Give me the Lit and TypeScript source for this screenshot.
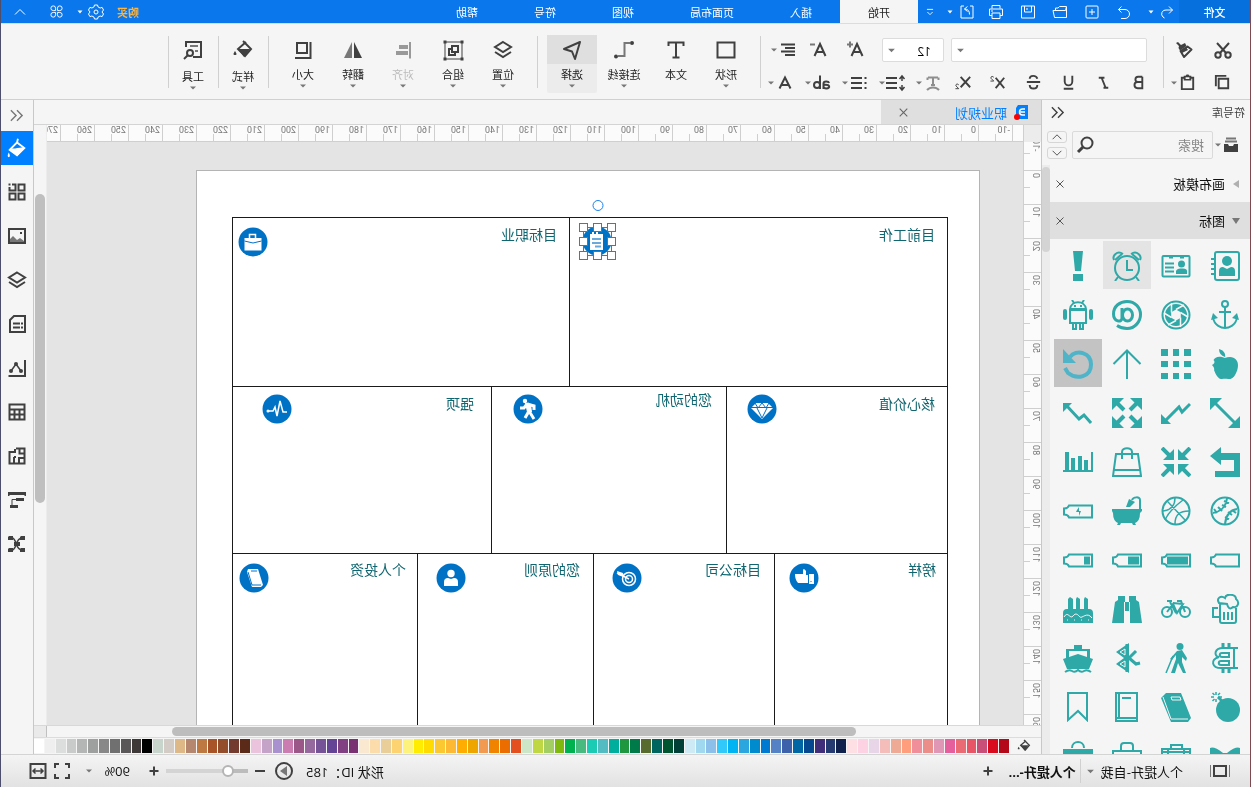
import { LitElement, html, svg, css, nothing, TemplateResult } from "lit";
import { customElement, property } from "lit/decorators.js";
import { styleMap } from "lit/directives/style-map.js";
import { classMap } from "lit/directives/class-map.js";

type Glyph = { box: number; body: TemplateResult };

const g = (box: number, body: TemplateResult): Glyph => ({ box, body });

/* Interface glyphs. s = stroked with currentColor, f = filled with currentColor. */
const GLYPHS: Record<string, Glyph> = {
  // title bar
  undo: g(16, svg`<path class="s1" d="M5.500 2.500 2.500 5.500 5.500 8.500M2.500 5.500H9a4.500 4.500 0 0 1 0 9H5"/>`),
  redoTop: g(16, svg`<path class="s1" d="M10 2.500 13.500 6 10 9.500M13.500 6H7a4 4 0 0 0-3 7l1.500 1"/>`),
  plusBox: g(16, svg`<rect class="s1" x="2" y="2" width="12" height="12" rx="1"/><path class="s1" d="M8 5v6M5 8h6"/>`),
  folder: g(16, svg`<path class="s1" d="M14.500 13.500h-12L1 6.500h12.500l1-4h-7L6 4H3.500v2M14.500 13.500V3"/>`),
  save: g(16, svg`<path class="s1" d="M1.500 2h13v12h-13zM4.500 2v6h7V2M7 4v2"/>`),
  print: g(16, svg`<path class="s1" d="M4 4.500v-3h8v3M4 11.500H1.500V5h13v6.500H12M4 9h8v5.500H4zM3 7h2"/>`),
  exporting: g(16, svg`<path class="s1" d="M5 2H2v12h12V2h-3M8.500 2.500 5.500 5l3 2.500M5.500 5c3.500 0 5 2 5 5.500"/>`),
  more: g(16, svg`<path class="s1" d="M4.500 5h7M5 8l3 3 3-3"/>`),
  gear: g(16, svg`<circle class="s1" cx="8" cy="8" r="2"/><path class="s1" d="M6.500 1h3l.6 2 2 1 2-.6 1.400 2.600L14 8l1.500 2-1.400 2.600-2-.6-2 1-.6 2h-3l-.6-2-2-1-2 .6L.5 10 2 8 .5 6l1.400-2.600 2 .6 2-1z"/>`),
  clover: g(16, svg`<path class="s1" d="M7 7H4.500A2.500 2.500 0 1 1 7 4.500zM9 7V4.500A2.500 2.500 0 1 1 11.500 7zM7 9v2.500A2.500 2.500 0 1 1 4.500 9zM9 9h2.500A2.500 2.500 0 1 1 9 11.500z"/>`),
  up: g(16, svg`<path class="s1" d="m3 10.500 5-5 5 5"/>`),
  down: g(16, svg`<path class="s1" d="m3 5.500 5 5 5-5"/>`),
  // ribbon
  cut: g(20, svg`<path class="s2" d="m4 3 9 10M16 3 7 13"/><circle class="s2" cx="5" cy="15" r="2.700"/><circle class="s2" cx="15" cy="15" r="2.700"/>`),
  copy: g(20, svg`<path class="s2" d="M6 6h10v10H6z"/><path class="s2" d="M3 14V3h11"/>`),
  brush: g(20, svg`<path class="f" d="m2 3 2-1 3 3 4-2 1.500 3L6 10.500 4.500 8 5 6z"/><path class="s2" stroke-linejoin="round" d="m6.500 11 7-4.500 4 3L10 17z"/><path class="f" d="m6 11 6-4 2 3-6 3z"/>`),
  paste: g(20, svg`<path class="s2" d="M4 5h12v12H4z"/><path class="f" d="M6 3h2l1-1.500h2L12 3h2v5H6z"/><path fill="#f5f5f5" d="M8 4.500h4v1.800H8z"/>`),
  bold: g(20, svg`<path class="s2" d="M14 4v12H9a3 3 0 0 1 0-6.500h5M14 4H9.500a2.700 2.700 0 0 0 0 5.500"/>`),
  italic: g(20, svg`<path class="s2" d="M5 5h6M10 15.500h5M8 5l4 10"/>`),
  underline: g(20, svg`<path class="s2" d="M6 3v6a4 4 0 0 0 8 0V3M5 16.500h10"/>`),
  strike: g(20, svg`<path class="s2" d="M3 9.500h14M14 6c-1-4-8-4-8 0M6 12.500c0 5 8 5 8 0"/>`),
  sup: g(20, svg`<path class="s2" d="M7 5l9 11M16 5 7 16"/><path class="s1" d="M5 4.500C4 3 1.500 3.500 2 5.500L5 8.500H1.500"/>`),
  sub: g(20, svg`<path class="s2" d="M7 4l10 11M17 4 7 15"/><path class="s1" d="M5 12.500C4 11 1.500 11.500 2 13.500L5 16.500H1.500"/>`),
  clear: g(20, svg`<path class="s2" d="M5 4.500h10M10 4v8M4.500 7V4.500M15.500 7V4.500M8 12h4M4 17c3-3.500 9-3.500 12 0"/>`),
  spacing: g(20, svg`<path class="s2" d="M0 5h11M0 10h11M0 15h11"/><path class="s1h" d="M16 3v5M16 12v5M13.500 6 16 3l2.500 3M13.500 14 16 17l2.500-3"/>`),
  list: g(20, svg`<path class="s2" d="M2 5h11M2 10h11M2 15h11M15.500 5h2M15.500 10h2M15.500 15h2"/>`),
  align: g(20, svg`<path class="s2" d="M3 4.500h14M7 8h10M3 11.500h14M7 15h10"/>`),
  bigger: g(20, svg`<path class="s2" d="M5.500 16 11 4l5.500 12M7.500 12h7"/><path class="s2 dim" d="M4 1.500v6M1 4.500h6"/>`),
  smaller: g(20, svg`<path class="s2" d="M5.500 16 11 4l5.500 12M7.500 12h7"/><path class="s2 dim" d="M1 4.500h5"/>`),
  colorA: g(20, svg`<path class="s2" d="M4.500 15.500 10 4.500l5.500 11M6.500 12h7"/>`),
  ab: g(20, svg`<path class="s2" d="M8 2.500V16M8 12a3 3 0 1 0-6 0 3 3 0 1 0 6 0M11.500 16V10.500c0-2.500 5-2.500 5.500-.5M11.500 12c7-1 7 3.500 3 3.500-2 0-3-1-3-2"/>`),
  rect: g(24, svg`<path class="s2" d="M3.500 4.500h17v15h-17z"/>`),
  text: g(24, svg`<path class="s2" d="M4.500 8V4.500h15V8M12 4.500v15M8.500 19.500h7"/>`),
  connector: g(24, svg`<path class="s2 dim" d="M18 5h-5.500v13H6"/><circle class="f" cx="20" cy="5" r="2"/><circle class="f" cx="4" cy="18.500" r="2"/>`),
  select: g(24, svg`<path class="s2" stroke-linejoin="round" d="M20 4 4 11l8 2.500L15 21z"/>`),
  layers: g(24, svg`<path class="s2" d="m12 4 8 5-8 5-8-5zM4 14l8 5 8-5"/>`),
  group: g(24, svg`<path class="s1" d="M4 4h17v17H4z"/><path class="f" d="M2.500 2.500h3v3h-3zM19.500 2.500h3v3h-3zM2.500 19.500h3v3h-3zM19.500 19.500h3v3h-3z"/><path class="s2" d="M11 8h6v6h-6zM11 11H8v6h6v-3"/>`),
  alignObj: g(24, svg`<path class="s2" d="M19 4v16.500"/><path class="f" d="M8 7h9v4H8zM5 13h12v4H5z"/>`),
  flip: g(24, svg`<path class="f dimfill" d="M11 4v16H3z"/><path class="f" d="M13 4v16h8z"/>`),
  size: g(24, svg`<path class="s2" d="M6 5h10v10H6zM19.500 4v16H4"/>`),
  bucket: g(24, svg`<path class="s2" d="m12 3 8 8-6 7-7-7 8-7"/><path class="f" d="M7 11h12l-6 8zM4 13c2 3 2 4 0 4s-2-1 0-4"/>`),
  bucketSolid: g(24, svg`<path class="s2" d="m13 2-1 4-8 8 8 6 8-8-8-6"/><path class="f" d="M4 12c5 2 12-2 16 0l-8 9zM3 17c2 4 1 5 0 5s-2-1 0-5"/>`),
  tool: g(24, svg`<path class="s2" d="M5 9V4h15v15h-8"/><path class="s2 dim" d="M9 8h8M14 13h3"/><circle class="s2" cx="9" cy="15" r="3"/><path class="s2" d="m7 17-4 4"/>`),
  // symbol panel
  rewind: g(16, svg`<path class="s1h" d="m2 2.500 5.500 5.500L2 13.500M8.500 2.500 14 8l-5.500 5.500"/>`),
  drawer: g(16, svg`<path class="s2 dim" d="M3 1.500h10M2 4.500h12"/><path class="f" d="M1 7h4l1 2h4l1-2h4v8H1z"/>`),
  search: g(20, svg`<circle class="s2" cx="12" cy="8" r="5.500"/><path class="s3" d="m8 12-5 5"/>`),
  close: g(12, svg`<path class="s1" d="m2.500 2.500 7 7M9.500 2.500l-7 7"/>`),
  triLeft: g(10, svg`<path class="f" d="M8 1v8L2 5z"/>`),
  triDown: g(10, svg`<path class="f" d="M1 2h8L5 8z"/>`),
  caret: g(8, svg`<path class="f dimfill" d="M1 2.500h6L4 5.500z"/>`),
  caretLight: g(8, svg`<path class="f" d="M1.500 2.500h5L4 5.500z"/>`),
  doc: g(16, svg`<path fill="#0080ff" d="M5 1h10v14H3V4z"/><path fill="none" stroke="#fff" stroke-width="1.500" d="M12 5H9.500a3 3 0 0 0 0 6H12M7.500 8H12"/><circle fill="#f00" cx="4" cy="13" r="3"/>`),
  // right tool strip
  blocks: g(20, svg`<path class="s2" d="M2.500 5v3.500h6V2.500H5M11.500 2.500h6v6h-6zM2.500 11.500h6v6h-6zM11.500 11.500h6v6h-6z"/><path class="f" d="M1.500 1.500h2v2h-2z"/>`),
  image: g(20, svg`<path class="s2" d="M2 3h16v14H2z"/><path class="f dimfill" d="M3 16v-3l3-3 4 4 3-2 4 3v1z"/><path class="f" d="M13 6h2v2h-2z"/>`),
  layersSmall: g(20, svg`<path class="s2" d="m10 2.500 8 5-8 5-8-5zM2 12l8 5 8-5"/>`),
  notes: g(20, svg`<path class="s2" d="M7 2h11v16H3V6z"/><path class="s2" d="M6 9.500h7M14 9.500h2M6 13.500h7M14 13.500h2"/>`),
  graph: g(20, svg`<path class="s2" d="M18 2v16H1.500"/><path class="s1h" d="m4 13 5-7 5 7"/><circle class="f" cx="4" cy="13" r="2"/><circle class="f" cx="9" cy="6" r="2"/><circle class="f" cx="14" cy="13" r="2"/>`),
  table: g(20, svg`<path class="s2" d="M2.500 2.500h15v15h-15zM2.500 7.500h15M2.500 12.500h15M7.500 7.500v10M12.500 7.500v10"/>`),
  plan: g(20, svg`<path class="s2" d="M9 2.500h8.500v15h-15V6H8V3M12.500 3v4.500h5M7 17v-6M12 17v-5h5M7 11h2"/>`),
  tree: g(20, svg`<path class="f" d="M1 2h18v4h-1.500V5h-15v1H1zM9 8h8v3H9zM3 15h8v3H3z"/><path class="s1" d="M9 9.500H5V16"/>`),
  mind: g(20, svg`<path class="f" d="M2 2h4v4H1V3zM14 2h4v4h-5V3zM2 14h4v4H1v-3zM14 14h4v4h-5v-3zM7 8h6v4H7z"/><path class="s1h" d="M5 4c5 0 3 12 10 12M15 4c-7 0-5 12-10 12"/>`),
  // status bar
  present: g(24, svg`<path class="s2" d="M6 7h12v10H6z"/><path class="s1 dim" d="M2.500 6v12M21.500 6v12"/>`),
  plus: g(12, svg`<path class="s2" d="M6 1.500v9M1.500 6h9"/>`),
  minus: g(12, svg`<path class="s2" d="M1 6h10"/>`),
  play: g(20, svg`<circle class="s2" cx="10" cy="10" r="8"/><path class="f dimfill" d="M13 5v10l-7-5z"/>`),
  full: g(20, svg`<path class="s2" d="M3 7V3h4M13 3h4v4M17 13v4h-4M7 17H3v-4"/>`),
  fit: g(20, svg`<path class="s2" d="M2.500 3h15v14h-15z"/><path class="s1h" d="M5 10h10M7.500 7.500 5 10l2.500 2.500M12.500 7.500 15 10l-2.500 2.500"/>`),
};

/* Shapes of the symbol library, all on a 30 unit grid. */
const SHAPES: Record<string, TemplateResult> = {
  contacts: svg`<rect class="s2" x="5" y="1" width="24" height="28" rx="2"/><path class="s2" d="M1 8h4M1 13h4M1 18h4M1 23h4"/><circle class="f" cx="17" cy="10" r="5"/><path class="f" d="M9 25v-5q0-4 4-4l4 2 4-2q4 0 4 4v5z"/>`,
  idCard: svg`<rect class="s2" x="1.500" y="5" width="27" height="20.500" rx="1"/><path class="s2" d="M8 6.500h4M19 6.500h4M4 12.500h9M4 16.500h9M4 20.500h9"/><circle class="f" cx="20.500" cy="13" r="3.500"/><path class="f" d="M15 23v-3q1-3 5.500-2.500Q26 17 26 20v3z"/>`,
  alarm: svg`<circle class="s2" cx="15" cy="17" r="12"/><path class="s2" d="M15 9v10h6M6 26l-3 4M24 26l3 4M2 9C0 5 5-1 11 3M28 9c2-4-3-10-9-6M3 9l7-6M27 9l-7-6"/>`,
  exclaim: svg`<path class="f" d="M10 0h10l-2 20h-6zM10 23h10v7H10z"/>`,
  anchor: svg`<circle class="s2" cx="15" cy="4" r="3"/><path class="s2" d="M15 7v22M9 12h12M3 17c1 9 9 11 12 11s11-2 12-11"/><path class="f" d="M1 20 3 13l5 5zM29 20l-2-7-5 5z"/>`,
  aperture: svg`<circle class="s2" cx="15" cy="15" r="13.500"/><circle class="f" cx="15" cy="15" r="11"/><path fill="#f5f5f5" d="m15 9.500 4.800 2.800v5.400L15 20.500l-4.800-2.800v-5.400z"/><path class="k2" d="M15 9.500 23 5M19.500 12.500 27 17M19.500 17.500V27M15 20.500 7 25M10.500 17.500 3 13M10.500 12.500V3"/>`,
  at: svg`<ellipse class="s3" cx="15.500" cy="15" rx="5" ry="6"/><path class="s3" d="M10 8v10c0 5-8.500 4-8.500-4C1.500 6 8 1.500 15 1.500c8 0 13.500 6 13.500 13S23 28.500 15 28.500c-4 0-7-1-10-3"/>`,
  android: svg`<path class="s2" d="M7 10h16v13H7zM7 9c1-9 15-9 16 0zM9 0l2 3M21 0l-2 3"/><rect class="f" x="0" y="9" width="4" height="11" rx="2"/><rect class="f" x="26" y="9" width="4" height="11" rx="2"/><path class="s2" d="M10 23v6h3v-6M17 23v6h3v-6"/><path class="f" d="M11 5h2v2h-2zM17 5h2v2h-2z"/>`,
  apple: svg`<path class="f" d="M15 9C9 6.500 5 8 3.500 11q2 2 0 4l-1.500 1q3 3 2 5c2 6 5 9.500 8 9 2-.5 4-.5 6 0 4 1 7-3 8.500-7C30 15 27 8 20 8q-3 0-5 1C16 4 13 1 9 0q0 6 6 8"/>`,
  grid9: svg`<path class="f" d="M0 0h7v7H0zM12 0h6v7h-6zM23 0h7v7h-7zM0 12h7v6H0zM12 12h6v6h-6zM23 12h7v6h-7zM0 24h7v6H0zM12 24h6v6h-6zM23 24h7v6h-7z"/>`,
  arrowUp: svg`<path class="s2" d="M15 2v28M1.500 15 15 1.500 28.500 15"/>`,
  refresh: svg`<path class="s4" d="M7 8C13 0 28 3 28 15.500S14 31 5 24L2 19"/><path class="f" d="M0 0v14h13z"/>`,
  diagonal: svg`<path class="s3" d="m4 4 22 22"/><path class="f" d="M0 0h12L0 12zM30 30V18L18 30z"/>`,
  zigDown: svg`<path class="s3" d="m4 23 14-14 3 5 8-8"/><path class="f" d="M0 16v10h10z"/>`,
  expand: svg`<path class="s4" d="m4 4 8 8M26 4l-8 8M4 26l8-8M26 26l-8-8"/><path class="f" d="M0 0h12L0 12zM30 0v12L18 0zM0 30V18l12 12zM30 30H18l12-12z"/>`,
  zigUp: svg`<path class="s3" d="m3 7 13 14 5-4 7 8"/><path class="f" d="M0 14V5h9z"/>`,
  turn: svg`<path class="f" d="M0 9 11 0v6h19v25H5v-7h19V13H11v5z"/>`,
  compress: svg`<path class="s4" d="m1 1 8 8M29 1l-8 8M1 29l8-8M29 29l-8-8"/><path class="f" d="M13 13H2L13 2zM17 13h11L17 2zM13 17v11L2 17zM17 17v11l11-11z"/>`,
  bag: svg`<path class="s2" d="M4 7h22l3 22H1zM2 23h26M10 12V5c0-5 10-5 10 0v7"/>`,
  bars: svg`<path class="f" d="M2 5h4v18H2zM8 11h4v12H8zM15 9h4v14h-4zM21 13h4v10h-4z"/><path class="s2" d="M29 5v19H0"/>`,
  baseball: svg`<circle class="s2" cx="15" cy="15" r="13.500"/><path class="s2" d="M17 2C16 12 9 16 3 17M27 13c-7 1-11 5-12 15M14 5l5 2M12 9l4 2M8 11l4 4M4 13l3 4M26 17l-4-3M22 19l-4-3M19 23l-4-2"/>`,
  basketball: svg`<circle class="s2" cx="15" cy="15" r="13.500"/><path class="s1h" d="M6 5c5 5 15 16 19 20M22 4C14 10 7 17 4 24M14 2c0 8-4 12-12 13M28 15c-9 0-14 3-14 13"/>`,
  bath: svg`<path class="f" d="M0 13h30v2l-2 2q0 8-5 10l1 2h-3l-1-2H9l-1 2H5l1-2q-5-2-5-10l-1-2z"/><path class="s2" d="M28 13V4c0-4-7-3-8 0"/><path class="f" d="m14 11 3-8 6 3-5 5z"/>`,
  charge: svg`<path class="s2" d="M6 9.500h23v12H6q-1-3-5-3v-6q4 0 5-3z"/><path class="f" d="m14 14 2-3v4h2l-2 5v-4h-3z"/>`,
  battery0: svg`<path class="s2" d="M6 9.500h23v12H6q-1-3-5-3v-6q4 0 5-3z"/>`,
  battery3: svg`<path class="s2" d="M6 9.500h23v12H6q-1-3-5-3v-6q4 0 5-3z"/><path class="f" d="M6 11.500h21v8H6z"/>`,
  battery2: svg`<path class="s2" d="M6 9.500h23v12H6q-1-3-5-3v-6q4 0 5-3z"/><path class="f" d="M16 11.500h11v8H16z"/>`,
  battery1: svg`<path class="s2" d="M6 9.500h23v12H6q-1-3-5-3v-6q4 0 5-3z"/><path class="f" d="M21 11.500h6v8h-6z"/>`,
  beer: svg`<path class="s2" d="M10 9v18q0 2 2 2h12q2 0 2-2V14M8 14H3v9h6M9 9C6 4 11 1 15 4c1-5 11-4 11 1 4 3 2 9-3 8-3 3-5 1-6-3z"/><path class="s2" d="M14 18v8M18 18v8M22 18v8"/>`,
  bike: svg`<circle class="s2" cx="6" cy="18" r="5"/><circle class="s2" cx="24" cy="18" r="5"/><path class="s2" d="m6 18 6-8 4 9 6-9-10-1M15 19 9 8M24 18 20 7h-4M6 7h5"/>`,
  binoculars: svg`<path class="f" d="M6 2h7v6h4V2h7v4l3 2 3 21H18V17h-6v12H0L3 8l3-2z"/><path class="k" d="M12.500 8v9M17.500 8v9"/>`,
  cake: svg`<path class="f" d="M0 19q0-4 4-4h22q4 0 4 4v10H0zM5 5l2-2 3 2v11H5zM13 5l1-2 3 2v11h-4zM21 5l1-2 3 2v11h-4z"/><path class="k" d="M1 23c4-7 6 3 9-1s5-1 7 1 7-6 12 1M4 26h1M11 26h1M18 26h1M25 26h1"/>`,
  bitcoin: svg`<path class="s2" d="M28 5H15C3 4 4 14 9 14c-9 2-8 12 4 11h15M24 5v20M12 10h7v4h-7c-3 0-3-4 0-4zM11 18h8v4h-8c-3 0-3-4 0-4z"/><path class="s3" d="M13 0v5M19 0v5M13 25v5M19 25v5"/>`,
  walker: svg`<circle class="f" cx="19" cy="3.500" r="3.500"/><path class="f" d="m16 8 5-1 5 8-1 3-4-4v5l4 11h-3l-5-10-3 10h-4l5-14v-4l-4 5-2-1z"/><path class="s1h" d="M12 13 5 30"/>`,
  bluetooth: svg`<path class="s3" d="M17 15 24 8M17 15l7 6 4-1M15 1v28"/><path class="f" d="M17 0 4 9l8 6-8 6 13 9z"/><path class="k" d="m8 9 5 3V6zM8 21l5-3v6z"/>`,
  boat: svg`<path class="f" d="M11 2h8v4h8v9l3 1-4 10H4L0 16l3-1V6h8z"/><path fill="#f5f5f5" d="M6 8h18v6l-9-3-9 3z"/><path class="s2" d="M2 29q4-3 7-1 3 2 6-1 3 3 6 1t7 1"/>`,
  bomb: svg`<circle class="f" cx="18" cy="18" r="12"/><path class="s3" d="m12 9-4-4"/><path class="s1h" d="M6 0v3M6 7v3M1 5h3M8 5h4M2.500 1l2 2M10 1 8 3M2.500 9l2-2"/>`,
  bookSolid: svg`<path class="f" d="M5 1h15l10 25-3 4H10L0 6z"/><path class="k" d="m2 5 8 22h17M10 5h9l1 3h-9z"/>`,
  bookLine: svg`<path class="s2" d="M4 1h21v28H4zM7 2v23M4 26h21M10 6h9"/>`,
  bookmark: svg`<path class="s2" d="M5 1h19v27l-9-9-10 9z"/>`,
  bow: svg`<path class="f" d="M0 7q4-2 13 5h4q9-7 13-5v20H0z"/>`,
  toolbox: svg`<path class="s2" d="M1 8h28v20H1zM10 8V4h11v4M1 11h28M7 7v6M23 7v6"/>`,
  briefLine: svg`<path class="s2" d="M1 10h28v18H1zM9 10V5q0-3 3-3h6q3 0 3 3v5"/>`,
  briefSolid: svg`<path class="f" d="M0 8h30v19H0z"/><path class="s2" d="M9 7c0-8 12-8 12 0"/>`,
};

/* White pictograms inside the blue diagram badges. */
const BADGES: Record<string, TemplateResult> = {
  memo: svg`<path class="w" d="M8 8h2V6h2v2h2V6h2v2h5v16H8z"/><path stroke="#69aadb" stroke-width="2" d="M10 13h9M10 17h9M13 20.500h6"/>`,
  briefcase: svg`<path class="w" d="M6.500 11h17v12.500h-17z"/><path class="ws" d="M11.500 11V7.500h6V11"/><path class="bs" d="m6.500 14 8.500 2 8.500-2"/>`,
  diamond: svg`<path class="w" d="m9 9 12 0 5 5-11 11L4 14z"/><path class="bs" d="M4 13.500h22M10 14l5 10 5-10M8 9l3 5 4-5 4 5 3-5"/>`,
  runner: svg`<circle class="w" cx="12" cy="7" r="2.200"/><path class="ws2" d="m14 9 2 8-4 7M16 17l5 8M14 10l7 2v4M14 10l-3 4H7"/><path class="w" d="m12 9 6 1 1 8h-5z"/>`,
  pulse: svg`<path class="ws" d="M6 17h5l2-4 2 9 3-15 3 11h4"/><circle class="w" cx="6" cy="17" r="1.500"/>`,
  thumb: svg`<path class="w" d="M6 11h8V8q0-4 3 0v4h2v8H9q-3-3-3-9M20 11h5v10h-5z"/><path class="bs" d="M22 18v1"/>`,
  target: svg`<circle class="ws" cx="17" cy="16" r="6.500"/><circle class="ws" cx="17" cy="16" r="3.500"/><path class="ws" d="m5 10 12 6"/><path class="w" d="m5 8 6 2 1 4-6-2z"/>`,
  person: svg`<circle class="w" cx="15" cy="10.500" r="3.700"/><path class="w" d="M8 23v-4q0-4 4-4l3 1 3-1q4 0 4 4v4z"/>`,
  book: svg`<path class="w" d="M9 6h10l5 16-2 2H13L8 9z"/><path class="bs" d="m9 9 4 13h9M12 8h6"/>`,
};

const glyph = (name: string, size: number) => {
  const item = GLYPHS[name];
  return html`<svg class="glyph" width=${size} height=${size} viewBox="0 0 ${item.box} ${item.box}" aria-hidden="true">${item.body}</svg>`;
};

const ink = css`
  :host, * { box-sizing: border-box; }
  button, input, select { font: inherit; color: inherit; margin: 0; padding: 0; border: 0; background: none; outline: none; }
  button { display: flex; align-items: center; justify-content: center; flex: none; white-space: nowrap; }
  svg { display: block; flex: none; }
  /* pictures keep their own handedness inside the mirrored window */
  .glyph { transform: scaleX(-1); }
  .s1, .s1h, .s2, .s3, .s4 { fill: none; stroke: currentColor; stroke-width: 1; }
  .s1h { stroke-width: 1.500; }
  .s2 { stroke-width: 2; }
  .s3 { stroke-width: 3; }
  .s4 { stroke-width: 4; }
  .f { fill: currentColor; }
  .k, .k2 { fill: none; stroke: #f5f5f5; stroke-width: 1; }
  .k2 { stroke-width: 1.500; }
  .dim { stroke: #777; }
  .dimfill { fill: #777; }
`;

@customElement("title-bar")
class TitleBar extends LitElement {
  static styles = [ink, css`
    :host { display: flex; height: 23px; background: #0a77ec; color: #fff; font-size: 11px; }
    .file { width: 71px; background: #0670dd; font-weight: 500; }
    .redo { width: 24px; }
    .quick { width: 32px; }
    .exporting { width: 26px; }
    .caret { width: 8px; }
    .after { margin-right: 7px; }
    .more { width: 24px; margin-left: 4px; }
    nav { display: flex; }
    .tab { padding: 0 28px; }
    .tab.on { background: #f5f5f5; color: #222; }
    .side { display: flex; margin-left: auto; }
    .buy { color: #ffb640; font-weight: 700; margin-right: 10px; }
    .gear { width: 22px; }
    .side .caret { width: 10px; }
    .clover { width: 36px; }
    .fold { width: 38px; }
  `];
  render() {
    const tabs = ["开始", "插入", "页面布局", "视图", "符号", "帮助"];
    const quick: [string, string][] = [["undo", "重做"], ["plusBox", "新建"], ["folder", "打开"], ["save", "保存"], ["print", "打印"]];
    return html`
      <button class="file">文件</button>
      <button class="redo" aria-label="撤销">${glyph("redoTop", 16)}</button>
      <button class="caret after" aria-label="撤销列表">${glyph("caretLight", 8)}</button>
      ${quick.map(([n, l]) => html`<button class="quick" aria-label=${l}>${glyph(n, 16)}</button>`)}
      <button class="exporting" aria-label="导出">${glyph("exporting", 16)}</button>
      <button class="caret" aria-label="导出列表">${glyph("caretLight", 8)}</button>
      <button class="more" aria-label="更多">${glyph("more", 14)}</button>
      <nav>${tabs.map((t, i) => html`<button class=${classMap({ tab: true, on: i === 0 })}>${t}</button>`)}</nav>
      <div class="side">
        <button class="buy">购买</button>
        <button class="gear" aria-label="设置">${glyph("gear", 16)}</button>
        <button class="caret" aria-label="设置列表">${glyph("caretLight", 8)}</button>
        <button class="clover" aria-label="应用">${glyph("clover", 15)}</button>
        <button class="fold" aria-label="折叠">${glyph("up", 16)}</button>
      </div>`;
  }
}

@customElement("tool-ribbon")
class ToolRibbon extends LitElement {
  static styles = [ink, css`
    :host { display: flex; height: 77px; background: #f5f5f5; color: #404040; border-top: 1px solid #dcdcdc; border-bottom: 1px solid #d0d0d0; }
    .clip { display: grid; grid-template: 33px 33px / 38px 40px; padding: 9px 0 0 8px; }
    .rule { width: 1px; height: 52px; margin-top: 12px; background: #d0d0d0; flex: none; }
    .format { padding: 9px 0 0 7px; }
    .row { display: flex; height: 33px; align-items: center; }
    .row.first { padding-left: 9px; }
    .pick { position: relative; display: block; height: 24px; background: #fff; border: 1px solid #dcdcdc; border-radius: 2px; margin-right: 7px; }
    .pick select { width: 100%; height: 100%; appearance: none; padding-left: 12px; font-size: 12px; color: #000; }
    .pick svg { position: absolute; right: 4px; top: 7px; }
    .family { width: 196px; }
    .points { width: 62px; }
    .b35 { width: 35px; }
    .b37 { width: 37px; }
    .combo { width: 37px; justify-content: flex-start; padding-left: 3px; }
    .muted { color: #8e8e8e; }
    .tools { display: flex; padding: 11px 9px 0; }
    .tools.tight { padding: 11px 0 0; width: 49px; }
    .tool { width: 50px; height: 58px; flex-direction: column; justify-content: flex-start; font-size: 11px; border-radius: 2px; }
    .tool.wide { width: 54px; }
    .tool .pic { width: 100%; height: 29px; display: flex; align-items: center; justify-content: center; }
    .tool .name { line-height: 14px; margin-top: 4px; color: #222; }
    .tight .tool .name { margin-top: 6px; }
    .tool.off { color: #999; }
    .tool.off .name { color: #bbb; }
    .tool.on { background: #ececec; }
    .tool.on .pic { background: #dfdfdf; }
  `];
  tool(icon: string, label: string, cls = "", caret = true) {
    return html`<button class="tool ${cls}"><span class="pic">${glyph(icon, 24)}</span><span class="name">${label}</span>${caret ? glyph("caret", 8) : nothing}</button>`;
  }
  combo(icon: string, label: string, cls = "") {
    return html`<button class="combo ${cls}" aria-label=${label}>${glyph(icon, 20)}${glyph("caret", 8)}</button>`;
  }
  render() {
    const marks: [string, string][] = [["bold", "加粗"], ["italic", "斜体"], ["underline", "下划线"], ["strike", "删除线"], ["sup", "上标"], ["sub", "下标"]];
    return html`
      <div class="clip">
        <button aria-label="剪切">${glyph("cut", 20)}</button>
        <button aria-label="格式刷">${glyph("brush", 20)}</button>
        <button aria-label="复制">${glyph("copy", 19)}</button>
        <button aria-label="粘贴">${glyph("paste", 19)}${glyph("caret", 8)}</button>
      </div>
      <div class="rule"></div>
      <div class="format">
        <div class="row first">
          <label class="pick family"><select aria-label="字体"><option></option></select>${glyph("caret", 9)}</label>
          <label class="pick points"><select aria-label="字号"><option>12</option></select>${glyph("caret", 9)}</label>
          <button class="b37" aria-label="增大字号">${glyph("bigger", 20)}</button>
          <button class="b37" aria-label="减小字号">${glyph("smaller", 20)}</button>
          ${this.combo("align", "对齐方式")}
        </div>
        <div class="row">
          ${marks.map(([n, l]) => html`<button class="b35" aria-label=${l}>${glyph(n, 19)}</button>`)}
          ${this.combo("clear", "清除格式", "muted")}
          ${this.combo("spacing", "行距")}
          ${this.combo("list", "项目符号")}
          ${this.combo("ab", "文字方向")}
          ${this.combo("colorA", "字体颜色")}
        </div>
      </div>
      <div class="rule"></div>
      <div class="tools">
        ${this.tool("rect", "形状")}${this.tool("text", "文本", "", false)}${this.tool("connector", "连接线", "wide")}${this.tool("select", "选择", "on")}
      </div>
      <div class="rule"></div>
      <div class="tools">
        ${this.tool("layers", "位置")}${this.tool("group", "组合")}${this.tool("alignObj", "对齐", "off")}${this.tool("flip", "翻转")}${this.tool("size", "大小")}
      </div>
      <div class="rule"></div>
      <div class="tools tight">${this.tool("bucket", "样式")}</div>
      <div class="rule"></div>
      <div class="tools tight">${this.tool("tool", "工具")}</div>
      <div class="rule"></div>`;
  }
}

@customElement("symbol-panel")
class SymbolPanel extends LitElement {
  static styles = [ink, css`
    :host { display: flex; flex-direction: column; width: 209px; min-height: 0; background: #f5f5f5; border-right: 1px solid #c8c8c8; color: #404040; }
    .head { display: flex; align-items: center; justify-content: space-between; height: 24px; padding: 0 8px 0 5px; font-size: 11px; flex: none; }
    .find { display: flex; align-items: center; height: 41px; padding-left: 11px; flex: none; }
    .caret { width: 10px; }
    .box { display: flex; align-items: center; width: 141px; height: 28px; border: 1px solid #dadada; border-radius: 2px; padding: 0 2px 0 8px; }
    .box input { flex: 1; min-width: 0; font-size: 13px; }
    .box input::placeholder { color: #888; opacity: 1; }
    .steps { display: flex; flex-direction: column; gap: 4px; margin-left: 5px; }
    .steps button { width: 20px; height: 12px; border: 1px solid #d6d6d6; border-radius: 3px; }
    .body { display: flex; flex: 1; min-height: 0; }
    .list { flex: 1; min-width: 0; overflow: hidden; }
    .section { display: flex; align-items: center; height: 37px; padding: 0 4px 0 9px; font-size: 13px; color: #111; }
    .section .tri { color: #777; margin-right: 6px; width: 10px; }
    .section.shut .tri { color: #b0b0b0; }
    .section.open { background: #dfdfdf; }
    .section .x { margin-left: auto; color: #555; }
    .shapes { display: grid; grid-template-columns: repeat(4, 48px); grid-auto-rows: 48px; gap: 1px; padding: 2px 0 0 1px; color: #2fa8a8; }
    .shapes button { padding-top: 2px; }
    .hover { background: #e4e4e4; }
    .chosen { background: #c3c3c3; color: #4fb4c8; }
    .track { width: 8px; background: #ececec; }
    .thumb { width: 8px; height: 85px; margin-top: 2px; border-radius: 4px; background: #d4d4d4; }
  `];
  render() {
    return html`
      <div class="head"><span>符号库</span><button aria-label="收起">${glyph("rewind", 15)}</button></div>
      <div class="find">
        <button aria-label="符号分类">${glyph("drawer", 16)}</button>
        <button class="caret" aria-label="展开分类">${glyph("caret", 8)}</button>
        <label class="box"><input type="text" placeholder="搜索" aria-label="搜索">${glyph("search", 20)}</label>
        <div class="steps">
          <button aria-label="上一个">${glyph("up", 14)}</button>
          <button aria-label="下一个">${glyph("down", 14)}</button>
        </div>
      </div>
      <div class="body">
        <div class="list">
          <div class="section shut"><span class="tri">${glyph("triLeft", 10)}</span>画布模板<button class="x" aria-label="关闭画布模板">${glyph("close", 12)}</button></div>
          <div class="section open"><span class="tri">${glyph("triDown", 10)}</span>图标<button class="x" aria-label="关闭图标">${glyph("close", 12)}</button></div>
          <div class="shapes">
            ${Object.keys(SHAPES).map((name) => html`<button class=${classMap({ hover: name === "alarm", chosen: name === "refresh" })} aria-label=${name}>
              <svg class="glyph" width="30" height="30" viewBox="0 0 30 30" aria-hidden="true">${SHAPES[name]}</svg></button>`)}
          </div>
        </div>
        <div class="track"><div class="thumb"></div></div>
      </div>`;
  }
}

@customElement("ruler-scale")
class RulerScale extends LitElement {
  @property({ type: Boolean, reflect: true }) upright = false;
  @property({ type: Number }) count = 28;
  static styles = css`
    :host, .step { box-sizing: border-box; }
    :host { display: flex; overflow-x: clip; min-width: 0; min-height: 0; background: #fbfbfb; color: #777; font-family: Roboto, sans-serif; font-size: 9px; }
    .step { flex: none; width: 34px; height: 16px; border-left: 1px solid #cfcfcf; line-height: 11px; padding-left: 2px;
      background: linear-gradient(#cfcfcf, #cfcfcf) 16px 9px / 1px 7px no-repeat; }
    span { display: block; }
    :host([upright]) { flex-direction: column; overflow-x: visible; overflow-y: clip; }
    :host([upright]) .step { width: 17px; height: 34px; border-left: 0; border-top: 1px solid #cfcfcf; padding: 2px 0 0 0;
      background: linear-gradient(#cfcfcf, #cfcfcf) 11px 16px / 7px 1px no-repeat; }
    :host([upright]) .step:first-child { margin-top: -6px; }
    :host([upright]) span { writing-mode: vertical-rl; transform: rotate(180deg); width: 11px; }
  `;
  render() {
    return Array.from({ length: this.count }, (_, i) => html`<div class="step"><span>${(i - 1) * 10}</span></div>`);
  }
}

type Cell = { label: string; left: number; top: number; icon: string; x: number; y: number };

@customElement("drawing-page")
class DrawingPage extends LitElement {
  static styles = [ink, css`
    :host { display: block; position: relative; flex: 1; min-width: 0; overflow: hidden; background: #e4e4e4; }
    .page { position: absolute; left: 43px; top: 28px; width: 784px; height: 1108px; background: #fff; border: 1px solid #b4b4b4; }
    .board { position: absolute; left: 31px; top: 46px; width: 716px; border: 1px solid #1a1a1a; }
    .line { display: grid; height: 168px; }
    .line + .line { border-top: 1px solid #1a1a1a; }
    .line i + i { border-left: 1px solid #1a1a1a; }
    .r1 { grid-template-columns: 377fr 337fr; }
    .r2 { grid-template-columns: 220fr 235fr 259fr; height: 167px; }
    .r3 { grid-template-columns: 172fr 181fr 176fr 185fr; height: 220px; }
    .label { position: absolute; font-size: 14px; line-height: 20px; color: #0f6670; white-space: nowrap; }
    .badge { position: absolute; width: 30px; height: 30px; }
    .w { fill: #fff; }
    .ws { fill: none; stroke: #fff; stroke-width: 1.500; }
    .ws2 { fill: none; stroke: #fff; stroke-width: 3; }
    .bs { fill: none; stroke: #0072c6; stroke-width: 1; }
    .grips { position: absolute; left: 362px; top: 28px; }
    .grips rect, .grips circle { fill: #fff; stroke: #1a82ec; }
    .grips path { fill: none; stroke: #1a82ec; }
  `];
  /* positions are page coordinates */
  cells: Cell[] = [
    { label: "目前工作", left: 44, top: 54, icon: "memo", x: 382, y: 70 },
    { label: "目标职业", left: 422, top: 54, icon: "briefcase", x: 726, y: 71 },
    { label: "核心价值", left: 44, top: 223, icon: "diamond", x: 217, y: 238 },
    { label: "您的动机", left: 267, top: 219, icon: "runner", x: 451, y: 238 },
    { label: "强项", left: 505, top: 223, icon: "pulse", x: 702, y: 238 },
    { label: "榜样", left: 43, top: 389, icon: "thumb", x: 175, y: 407 },
    { label: "目标公司", left: 218, top: 389, icon: "target", x: 352, y: 407 },
    { label: "您的原则", left: 399, top: 389, icon: "person", x: 528, y: 407 },
    { label: "个人投资", left: 573, top: 389, icon: "book", x: 725, y: 407 },
  ];
  render() {
    const spots = [[1, 24], [15, 24], [29, 24], [1, 38], [29, 38], [1, 52], [15, 52], [29, 52]];
    return html`<div class="page">
      <div class="board">
        <div class="line r1"><i></i><i></i></div>
        <div class="line r2"><i></i><i></i><i></i></div>
        <div class="line r3"><i></i><i></i><i></i><i></i></div>
      </div>
      ${this.cells.map((c) => html`
        <span class="label" style=${styleMap({ left: `${c.left}px`, top: `${c.top}px` })}>${c.label}</span>
        <svg class="badge glyph" viewBox="0 0 30 30" style=${styleMap({ left: `${c.x - 15}px`, top: `${c.y - 15}px` })} aria-hidden="true">
          <circle cx="15" cy="15" r="14.500" fill="#0072c6"/>${BADGES[c.icon]}</svg>`)}
      <svg class="grips" width="38" height="62" viewBox="0 0 38 62" aria-hidden="true">
        <circle cx="19" cy="6.500" r="5"/><path d="M5.500 28.500h28v28h-28z"/>
        ${spots.map(([x, y]) => svg`<rect x=${x + 0.5} y=${y + 0.5} width="8" height="8"/>`)}
      </svg>
    </div>`;
  }
}

const PALETTE = ("b30918 d80c1e c94f78 e75566 ea6b74 e65f9d df97b5 eb8d89 f08f99 ff9e7c eeaa94 f4bdb9 e9d5e8 fdd3e4 fddfe4 " +
  "10214d 243a70 412e7b 06488f 0066a4 3e61ab 5482c4 007ad0 008bcf 2ba6de 00b3f3 30c9f9 8cc0ea a0d8ef cdeaf5 " +
  "004036 005530 00655f 586b2e 007a49 1f9640 00ae9d 53bcc2 1bcbb3 48b97f 00b14f 7fb80e a3cf62 bed742 cde6c7 " +
  "e44f20 eb6d00 f08300 f39a51 efa500 ffad00 fdb933 fbc832 ffdb00 ffec00 fcf27c fcd370 eace9a fddcab fbe8d0 " +
  "7a3173 814081 654395 765297 96699e 9c5789 cb7cb1 a990cf c5a2c8 ebc3dc " +
  "5c2a19 733a2e 934d2a a85428 be7841 b5876e deb887 d3cbc6 c8d5cc " +
  "000000 3e3838 595757 707070 898888 9e9f9f b4b5b5 c9caca dcdddd efefef ffffff").split(" ");

@customElement("work-area")
class WorkArea extends LitElement {
  static styles = [ink, css`
    :host { display: flex; flex-direction: column; min-width: 0; min-height: 0; background: #f5f5f5; color: #404040; }
    .tabs { height: 25px; border-bottom: 1px solid #d4d4d4; flex: none; display: flex; }
    .tab { display: flex; align-items: center; width: 160px; background: #dfdfdf; padding: 0 16px 0 12px; font-size: 13px; color: #0080ff; }
    .tab span { margin-left: 6px; }
    .tab button { margin-left: auto; color: #666; }
    .middle { display: flex; flex: 1; min-height: 0; }
    .sheet { flex: 1; min-width: 0; display: grid; grid-template: 17px minmax(0, 1fr) / 18px minmax(0, 1fr); }
    .corner { background: #ececec; border-right: 1px solid #cfcfcf; }
    .across { border-bottom: 1px solid #cfcfcf; padding-left: 10px; }
    .down { border-right: 1px solid #cfcfcf; }
    .canvas { display: flex; min-height: 0; min-width: 0; }
    .vbar { width: 13px; border-left: 1px solid #ececec; padding: 69px 1px 0; }
    .vthumb { height: 309px; border-radius: 5px; background: #bfbfbf; }
    .hbar { display: flex; height: 13px; border-top: 1px solid #d8d8d8; border-bottom: 1px solid #dcdcdc; padding: 1px 0; flex: none; }
    .hthumb { width: 684px; margin-left: 185px; border-radius: 5px; background: #bdbdbd; }
    .stub { width: 13px; margin: -1px 0 -1px auto; border-left: 1px solid #c0c0c0; background: #eaeaea; }
    .palette { display: flex; height: 16px; align-items: center; padding-left: 9px; gap: 7px; flex: none; }
    .colors { display: flex; flex: 1; gap: 1px; }
    .color { flex: 1; height: 14px; min-width: 0; }
  `];
  render() {
    return html`
      <div class="tabs"><div class="tab">${glyph("doc", 16)}<span>职业规划</span><button aria-label="关闭文档">${glyph("close", 13)}</button></div></div>
      <div class="middle">
        <div class="sheet">
          <div class="corner"></div>
          <ruler-scale class="across" .count=${29}></ruler-scale>
          <ruler-scale class="down" upright .count=${18}></ruler-scale>
          <div class="canvas"><drawing-page></drawing-page></div>
        </div>
        <div class="vbar"><div class="vthumb"></div></div>
      </div>
      <div class="hbar"><div class="hthumb"></div><div class="stub"></div></div>
      <div class="palette">${glyph("bucket", 16)}
        <div class="colors">${PALETTE.map((c) => html`<button class="color" aria-label="#${c}" style=${styleMap({ background: `#${c}` })}></button>`)}</div>
      </div>`;
  }
}

@customElement("side-strip")
class SideStrip extends LitElement {
  static styles = [ink, css`
    :host { display: flex; flex-direction: column; width: 33px; background: #f5f5f5; border-left: 1px solid #c8c8c8; color: #404040; overflow: hidden; }
    .fold { height: 31px; color: #777; }
    .now { height: 34px; margin-bottom: 5px; background: #0080ff; color: #fff; }
    .item { height: 44px; }
  `];
  render() {
    const items = ["blocks", "image", "layersSmall", "notes", "graph", "table", "plan", "tree", "mind"];
    return html`
      <button class="fold" aria-label="展开">${glyph("rewind", 15)}</button>
      <button class="now" aria-label="填充">${glyph("bucketSolid", 22)}</button>
      ${items.map((n) => html`<button class="item" aria-label=${n}>${glyph(n, 20)}</button>`)}`;
  }
}

@customElement("status-bar")
class StatusBar extends LitElement {
  static styles = [ink, css`
    :host { display: flex; align-items: center; height: 33px; padding: 0 27px 0 18px; border-top: 1px solid #d4d4d4;
      background: linear-gradient(#f4f4f4, #e2e2e2); color: #404040; font-size: 13px; }
    .page { color: #111; margin-left: 25px; }
    .caret { width: 20px; }
    .line { width: 1px; height: 24px; background: #d0d0d0; margin-right: 4px; }
    .current { color: #111; font-weight: 700; }
    .add { margin-left: 14px; }
    .right { display: flex; align-items: center; margin-left: auto; }
    .shape { color: #111; margin-right: 12px; }
    .minus { margin: 0 6px 0 8px; }
    .plus { margin: 0 18px 0 6px; }
    .zoom { appearance: none; width: 28px; color: #111; }
    .drop { width: 26px; }
    .full { margin: 0 4px; }
    input { appearance: none; width: 82px; height: 14px; background: linear-gradient(90deg, #bcbcbc 24%, #d4d4d4 24%) 0 5px / 100% 4px no-repeat; }
    input::-webkit-slider-thumb { appearance: none; width: 12px; height: 12px; border: 2px solid #b4b4b4; border-radius: 6px; background: #fff; }
  `];
  render() {
    return html`
      <button aria-label="演示">${glyph("present", 24)}</button>
      <button class="page">个人提升-自我</button>
      <button class="caret" aria-label="页面列表">${glyph("caret", 9)}</button>
      <div class="line"></div>
      <button class="current">个人提升-...</button>
      <button class="add" aria-label="新建页面">${glyph("plus", 12)}</button>
      <div class="right">
        <span class="shape">形状 ID：185</span>
        <button aria-label="播放">${glyph("play", 20)}</button>
        <button class="minus" aria-label="缩小">${glyph("minus", 12)}</button>
        <input type="range" min="0" max="100" value="20" aria-label="缩放">
        <button class="plus" aria-label="放大">${glyph("plus", 12)}</button>
        <select class="zoom" aria-label="缩放比例"><option>90%</option></select>
        <button class="drop" aria-label="缩放列表">${glyph("caret", 8)}</button>
        <button class="full" aria-label="全屏">${glyph("full", 20)}</button>
        <button aria-label="适合宽度">${glyph("fit", 20)}</button>
      </div>`;
  }
}

@customElement("app-root")
class AppRoot extends LitElement {
  /* The whole window is shown mirrored left to right. */
  static styles = css`
    :host { display: flex; flex-direction: column; box-sizing: border-box; height: 100vh; overflow: hidden; transform: scaleX(-1);
      border-left: 1px solid #7d4a50; border-right: 1px solid #4d4d6c;
      font-family: "Open Sans", "Noto Sans CJK SC", "Noto Sans", sans-serif; }
    .body { flex: 1; min-height: 0; display: grid; grid-template-columns: auto minmax(0, 1fr) auto; grid-template-rows: minmax(0, 1fr); }
  `;
  render() {
    return html`
      <title-bar></title-bar>
      <tool-ribbon></tool-ribbon>
      <div class="body">
        <symbol-panel></symbol-panel>
        <work-area></work-area>
        <side-strip></side-strip>
      </div>
      <status-bar></status-bar>`;
  }
}
